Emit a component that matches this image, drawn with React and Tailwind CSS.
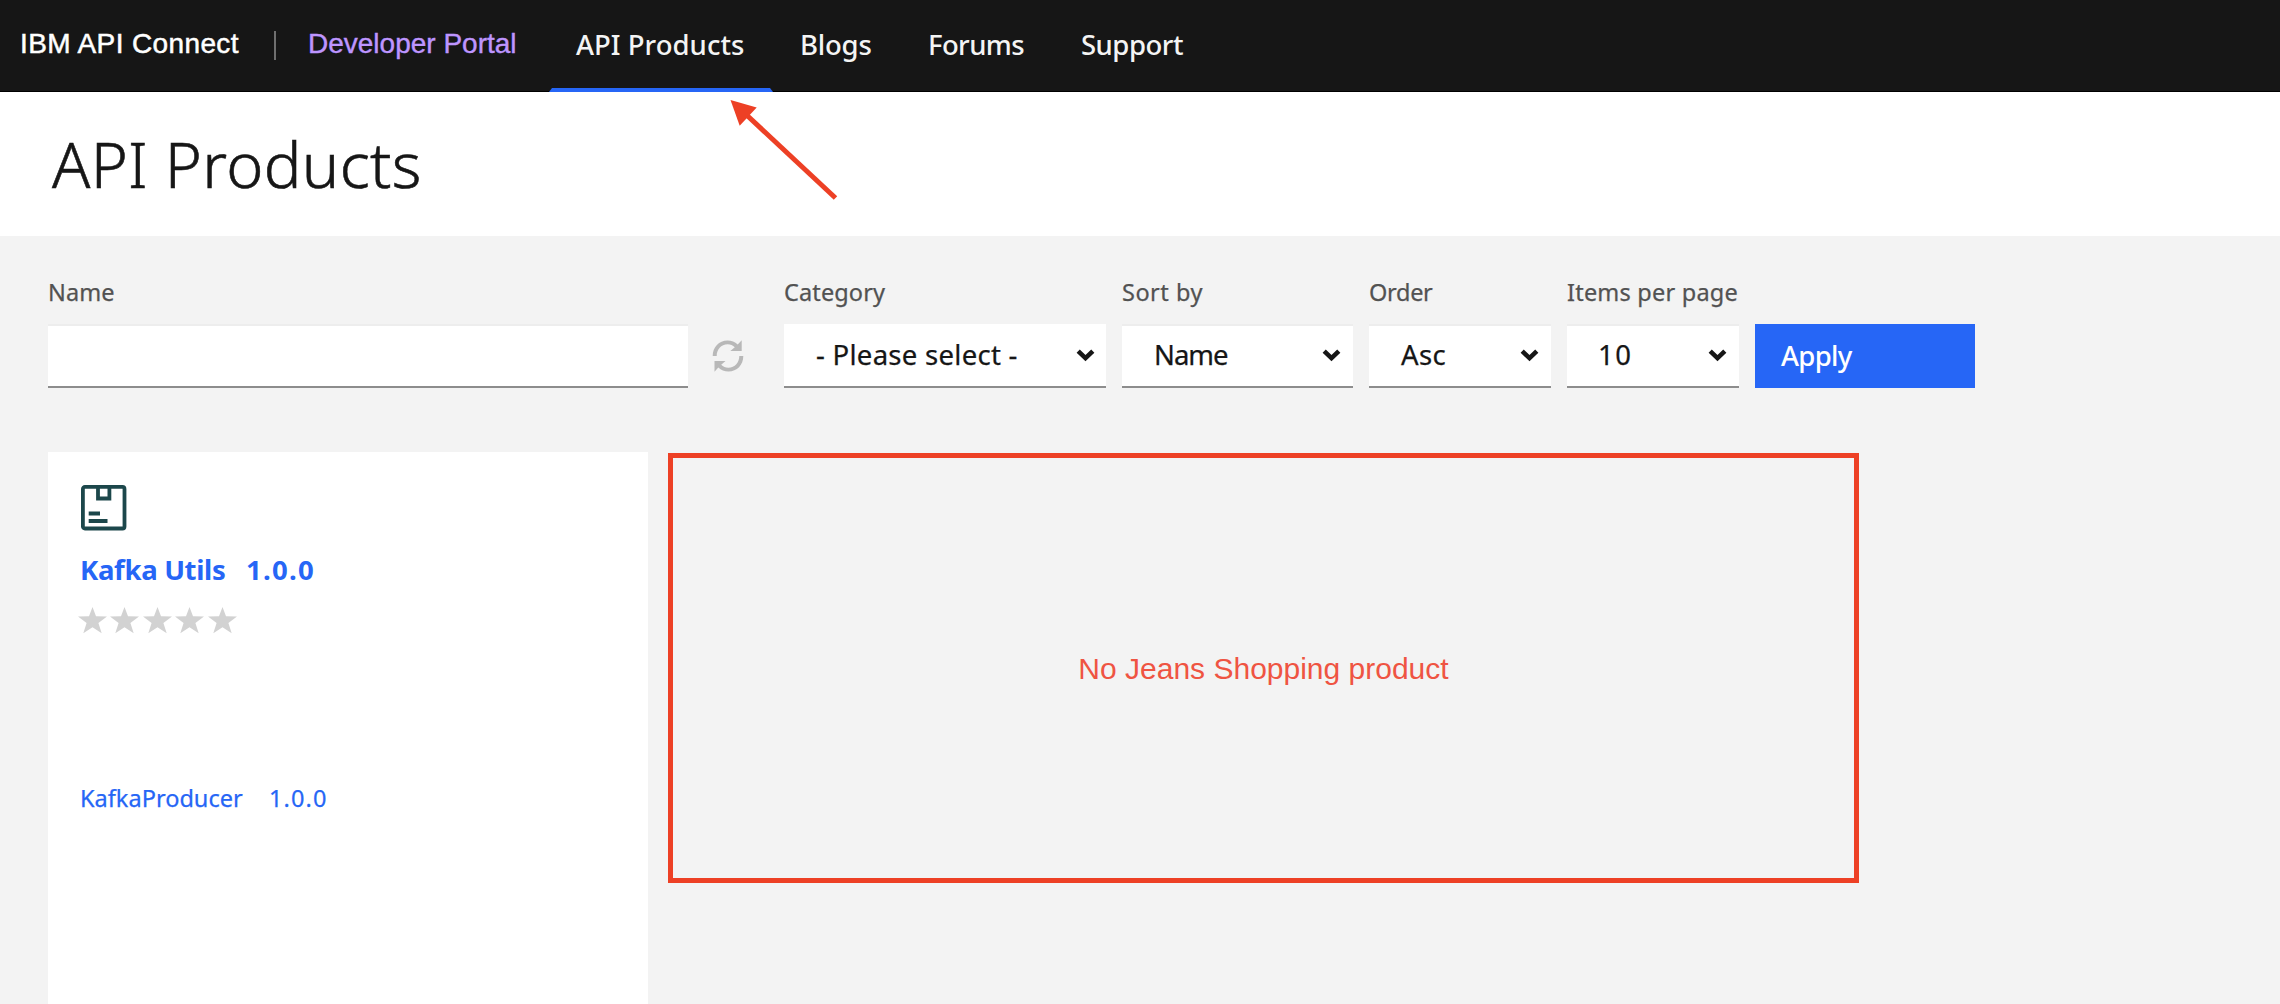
import React from "react";

const NAV = [
  { label: "API Products", box: "w-[224px]", track: "tracking-[0.03px]", active: true },
  { label: "Blogs", box: "w-[128px]", track: "tracking-[-0.2px]" },
  { label: "Forums", box: "w-[153px]", track: "tracking-[-0.6px]" },
  { label: "Support", box: "w-[156px]", track: "tracking-[-0.5px]" },
];

const SELECTS = [
  {
    label: "Category",
    value: "- Please select -",
    box: "w-[322px]",
    field: "pl-[32px] pr-[11px]",
    labelTrack: "tracking-[0.12px]",
    track: "tracking-[0.28px]",
    flat: true,
  },
  {
    label: "Sort by",
    value: "Name",
    box: "w-[231px]",
    field: "pl-[32px] pr-[12px]",
    labelTrack: "tracking-[0.5px]",
    track: "tracking-[-1px]",
  },
  {
    label: "Order",
    value: "Asc",
    box: "w-[182px]",
    field: "pl-[32px] pr-[12px]",
    labelTrack: "tracking-[-0.3px]",
    track: "tracking-[0.4px]",
  },
  {
    label: "Items per page",
    value: "10",
    box: "w-[172px]",
    field: "pl-[31px] pr-[12px]",
    labelTrack: "tracking-[0.22px]",
    track: "tracking-[1.5px]",
  },
];

function Header() {
  return (
    <header className="flex h-[92px] border-b border-black bg-[#161616]">
      <div className="flex h-[88px] w-[549px] shrink-0 items-center pl-5 font-['Liberation_Sans',sans-serif] text-[28px]">
        <span className="w-[254px] tracking-[0.38px] text-white [-webkit-text-stroke:0.5px_white]">
          IBM API Connect
        </span>
        <span className="mt-[3px] h-[29px] w-[2px] bg-[#6f6f6f]" />
        <span className="ml-8 text-[#be95ff] [-webkit-text-stroke:0.4px_#be95ff]">Developer Portal</span>
      </div>
      <nav className="flex text-[27.5px] font-medium leading-[89px] text-[#f4f4f4]">
        {NAV.map((n) => (
          <a key={n.label} className={`flex h-[92px] flex-col ${n.box} ${n.track}`}>
            <span className="h-[88px] whitespace-nowrap pl-[27px]">{n.label}</span>
            {n.active && (
              <span className="h-1 bg-[#2666f6] [clip-path:polygon(3px_0,calc(100%-3px)_0,100%_100%,0_100%)]" />
            )}
          </a>
        ))}
      </nav>
    </header>
  );
}

function Arrow() {
  return (
    <svg className="absolute left-[728px] top-[98px] h-[104px] w-[112px]" viewBox="728 98 112 104">
      <path d="M745 113.500L835.500 198" stroke="#ed4025" strokeWidth="5" />
      <path d="M730.500 100L756.700 107.600L739.700 125.700Z" fill="#ed4025" />
    </svg>
  );
}

function Chevron() {
  return (
    <svg className="h-[13px] w-[19px]" viewBox="0 0 19 13">
      <path d="M2.200 2.200L9.500 9.100L16.800 2.200" fill="none" stroke="#161616" strokeWidth="4.600" />
    </svg>
  );
}

function RefreshIcon() {
  return (
    <svg className="h-8 w-8" viewBox="0 0 32 32" fill="#b8b8b8">
      <path d="M0.700 16C0.700 7 7 0.500 15.500 0.500C19.500 0.500 23 2 25.700 4.500L29.700 0.200V11H18.300L22.800 7.300C20.800 5.500 18.500 4.300 15.700 4.300C9 4.300 4.700 9.500 4.700 16Z" />
      <path d="M31.300 16C31.300 25 25 31.500 16.500 31.500C12.500 31.500 9 30 6.300 27.500L2.500 31.800V21H13.500L9.200 24.700C11.200 26.500 13.500 27.700 16.300 27.700C23 27.700 27.300 22.500 27.300 16Z" />
    </svg>
  );
}

function ProductIcon() {
  return (
    <svg className="ml-[1.3px] h-[46px] w-[46px]" viewBox="0 0 46 46" fill="none" stroke="#1c474b" strokeWidth="3.800">
      <rect x="1.900" y="1.900" width="41.600" height="41.600" rx="2" />
      <path d="M17 3V13.500H28.400V3M7.700 28.500H19M7.700 36H26.500" />
    </svg>
  );
}

function Star() {
  return (
    <svg className="h-[27px] w-[29px]" viewBox="0 0 29 27" fill="#d2d2d2">
      <path d="M14.500 0L18 9.200L29 9.500L20.400 16L23.700 26.200L14.500 20.300L5.300 26.200L8.600 16L0 9.500L11 9.200Z" />
    </svg>
  );
}

function Filters() {
  return (
    <div className="flex items-end text-[27.5px] text-[#161616] [-webkit-text-stroke:0.25px_currentColor]">
      <div className="w-[640px]">
        <div className="text-[23.5px] leading-8 tracking-[0.1px] text-[#525252]">Name</div>
        <div className="mt-4 h-16 border-b-2 border-t-2 border-b-[#8d8d8d] border-t-[#ededed] bg-white" />
      </div>
      <div className="mb-4 ml-6 mr-10 flex h-8 w-8">
        <RefreshIcon />
      </div>
      <div className="flex items-end gap-4">
        {SELECTS.map((s) => (
          <div key={s.label} className={s.box}>
            <div className={`whitespace-nowrap text-[23.5px] leading-8 text-[#525252] ${s.labelTrack}`}>
              {s.label}
            </div>
            <div
              className={`mt-4 flex h-16 items-center justify-between border-b-2 border-b-[#8d8d8d] bg-white leading-[62px] ${s.field} ${
                s.flat ? "" : "shadow-[inset_0_2px_0_#ededed]"
              }`}
            >
              <span className={`whitespace-nowrap ${s.track}`}>{s.value}</span>
              <Chevron />
            </div>
          </div>
        ))}
        <button className="h-16 w-[220px] bg-[#2666f6] pl-[26px] text-left font-medium leading-[64px] tracking-[-0.7px] text-white [-webkit-text-stroke:0]">
          Apply
        </button>
      </div>
    </div>
  );
}

function ProductCard() {
  return (
    <article className="h-[600px] w-[600px] shrink-0 bg-white pl-8 pt-[33px] text-[#2666f6]">
      <ProductIcon />
      <h2 className="mt-[19px] flex text-[27.5px] font-bold leading-10">
        <span className="w-[166px] tracking-[-0.32px]">Kafka Utils</span>
        <span className="tracking-[1.3px]">1.0.0</span>
      </h2>
      <div className="-ml-[2px] mt-[17px] flex gap-[3.4px]">
        {[1, 2, 3, 4, 5].map((n) => (
          <Star key={n} />
        ))}
      </div>
      <div className="mt-[148px] flex text-[23.5px] leading-8 [-webkit-text-stroke:0.25px_currentColor]">
        <span className="w-[189px] tracking-[0.02px]">KafkaProducer</span>
        <span className="tracking-[1.1px]">1.0.0</span>
      </div>
    </article>
  );
}

export default function App() {
  return (
    <div className="relative flex h-[1004px] w-[2280px] flex-col overflow-hidden bg-[#f3f3f3] font-['Noto_Sans',sans-serif]">
      <Header />
      <div className="h-36 shrink-0 bg-white pl-[52px]">
        <h1 className="text-[63px] font-light leading-[144px] tracking-[0.35px] text-[#161616] [-webkit-text-stroke:0.6px_#161616]">
          API Products
        </h1>
      </div>
      <main className="px-12 pt-10">
        <Filters />
        <div className="mt-16 flex items-start">
          <ProductCard />
          <div className="ml-5 mt-px flex h-[430px] w-[1191px] items-center justify-center border-[5px] border-[#ed4025] font-['Liberation_Sans',sans-serif] text-[30px] text-[#ef5442]">
            No Jeans Shopping product
          </div>
        </div>
      </main>
      <Arrow />
    </div>
  );
}
